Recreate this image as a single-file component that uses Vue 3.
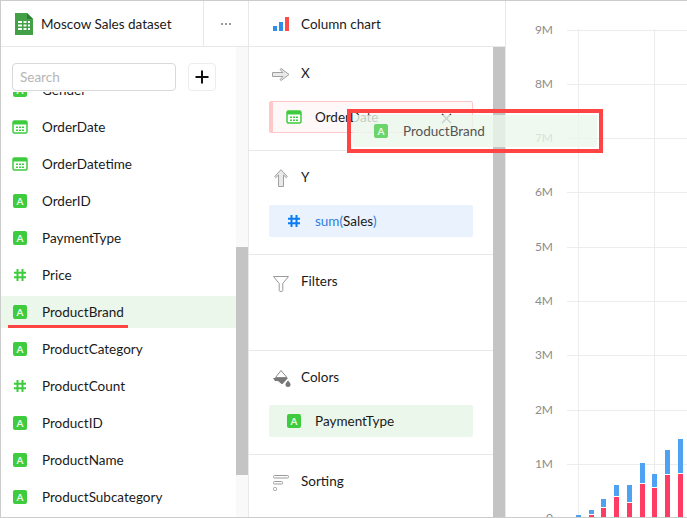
<template>
  <div class="wizard">
    <aside class="dataset-panel">
      <header class="panel-head">
        <svg class="sheet-icon" width="18" height="22" viewBox="0 0 18 22">
          <path d="M0 0h12l6 6v16H0z" fill="#43a047" />
          <path d="M12 0l6 6h-6z" fill="#2e7d32" />
          <path d="M3 8h4v2H3zM8.500 8h3v2h-3zM13 8h2v2h-2zM3 11.500h4v2H3zM8.500 11.500h3v2h-3zM13 11.500h2v2h-2zM3 15h4v2H3zM8.500 15h3v2h-3zM13 15h2v2h-2z" fill="#fff" />
        </svg>
        <span class="dataset-name">Moscow Sales dataset</span>
        <button class="more-btn"><i></i><i></i><i></i></button>
      </header>
      <div class="panel-body">
        <div class="field-column">
          <div class="search-row">
            <div class="search-box">Search</div>
            <button class="add-btn">
              <svg width="14" height="14" viewBox="0 0 14 14"><path d="M7 0.500v13M0.500 7h13" stroke="#111" stroke-width="2" /></svg>
            </button>
          </div>
          <div class="field-area">
            <ul class="field-list">
              <li v-for="field in fields" :key="field.name" :class="['field-row', { active: field.name === 'ProductBrand' }]">
                <svg v-if="field.type === 'date'" class="type-icon" width="16" height="14" viewBox="0 0 16 14">
                  <rect x="1" y="1" width="14" height="12" rx="1.500" fill="#fff" stroke="#3ecb3e" stroke-width="1.500" />
                  <path d="M1 1h14v3.500H1z" fill="#3ecb3e" />
                  <path d="M4 6.500h2V8H4zM7 6.500h2V8H7zM10 6.500h2V8h-2zM4 9.500h2V11H4zM7 9.500h2V11H7zM10 9.500h2V11h-2z" fill="#3ecb3e" />
                </svg>
                <span v-else-if="field.type === 'text'" class="type-text">A</span>
                <svg v-else class="type-icon" width="14" height="14" viewBox="0 0 14 14">
                  <path d="M4.500 1v12M9.500 1v12M1 4.800h12M1 9.200h12" stroke="#3ecb3e" stroke-width="2" fill="none" />
                </svg>
                <span class="field-name">{{ field.name }}</span>
              </li>
            </ul>
          </div>
        </div>
        <div class="scroll-track"><div class="list-thumb"></div></div>
      </div>
      <div class="field-underline"></div>
    </aside>

    <section class="config-panel">
      <header class="panel-head chart-head">
        <svg width="16" height="14" viewBox="0 0 16 14" class="chart-icon">
          <path d="M0 9h4v5H0z" fill="#2f8fe8" />
          <path d="M6 5h4v9H6z" fill="#2f8fe8" />
          <path d="M12 0h4v14h-4z" fill="#ff4b4b" />
        </svg>
        <span>Column chart</span>
      </header>
      <div class="config-body">
        <div class="sections">
          <div class="section">
            <div class="section-title">
              <svg width="18" height="13" viewBox="0 0 18 13" class="section-icon icon-x">
                <path d="M0.500 4.500H11L8 1.500 9.200 0.500 17 6.500 9.200 12.500 8 11.500 11 8.500H0.500z" fill="#e9e9e9" stroke="#a0a0a0" />
              </svg>
              <span>X</span>
            </div>
            <div class="chip chip-error">
              <svg class="type-icon" width="16" height="14" viewBox="0 0 16 14">
                <rect x="1" y="1" width="14" height="12" rx="1.500" fill="#fff" stroke="#3ecb3e" stroke-width="1.500" />
                <path d="M1 1h14v3.500H1z" fill="#3ecb3e" />
                <path d="M4 6.500h2V8H4zM7 6.500h2V8H7zM10 6.500h2V8h-2zM4 9.500h2V11H4zM7 9.500h2V11H7zM10 9.500h2V11h-2z" fill="#3ecb3e" />
              </svg>
              <span class="chip-name">OrderDate</span>
              <svg class="chip-close" width="11" height="11" viewBox="0 0 11 11"><path d="M1 1l9 9M10 1l-9 9" stroke="#444" stroke-width="1.500" /></svg>
            </div>
          </div>
          <div class="section">
            <div class="section-title">
              <svg width="14" height="18" viewBox="0 0 14 18" class="section-icon icon-y">
                <path d="M7 0.700L13.300 7.500 12.300 8.700 9.500 6V17.500H4.500V6L1.700 8.700 .7 7.500z" fill="#e9e9e9" stroke="#a0a0a0" />
              </svg>
              <span>Y</span>
            </div>
            <div class="chip chip-measure">
              <svg class="type-icon hash" width="14" height="14" viewBox="0 0 14 14">
                <path d="M4.500 1v12M9.500 1v12M1 4.800h12M1 9.200h12" stroke="#0c7cf2" stroke-width="2" fill="none" />
              </svg>
              <span class="chip-name"><b>sum(</b>Sales<b>)</b></span>
            </div>
          </div>
          <div class="section filters">
            <div class="section-title">
              <svg width="16" height="16" viewBox="0 0 16 16" class="section-icon icon-filter">
                <path d="M0.500 0.500h15l-5.700 7v7q0 1-1.800 1t-1.800-1v-7z" fill="#fff" stroke="#9a9a9a" />
              </svg>
              <span>Filters</span>
            </div>
          </div>
          <div class="section">
            <div class="section-title">
              <svg width="18" height="17" viewBox="0 0 18 17" class="section-icon icon-colors">
                <path d="M8 0.500l1.200 1.500 4.800 5.500H2.500z" fill="#fff" stroke="#8a8a8a" />
                <path d="M0 8h15l-5 5.500q-1 1-2 0L5 11l-3 0z" fill="#777" />
                <path d="M15 10.500q2.500 2.500 2.500 4a2.400 2.400 0 0 1-5 0q0-1.500 2.500-4z" fill="#777" />
              </svg>
              <span>Colors</span>
            </div>
            <div class="chip chip-dimension">
              <span class="type-text">A</span>
              <span class="chip-name">PaymentType</span>
            </div>
          </div>
          <div class="section">
            <div class="section-title">
              <svg width="16" height="16" viewBox="0 0 16 16" class="section-icon icon-sort">
                <rect x="0.500" y="0.500" width="15" height="2.500" rx="1" fill="#fff" stroke="#9a9a9a" />
                <rect x="0.500" y="6.500" width="9" height="2.500" rx="1" fill="#fff" stroke="#9a9a9a" />
                <rect x="0.500" y="12.500" width="3" height="3" rx="1" fill="#fff" stroke="#9a9a9a" />
              </svg>
              <span>Sorting</span>
            </div>
          </div>
        </div>
        <div class="config-scroll"></div>
      </div>
    </section>

    <main class="chart-panel">
      <svg class="chart" width="181" height="517" viewBox="506 1 181 517">
        <line x1="578.500" y1="29" x2="578.500" y2="518" stroke="#ececec" />
        <line x1="654.500" y1="29" x2="654.500" y2="518" stroke="#ececec" />
        <g v-for="tick in ticks" :key="tick.label">
          <text x="553" :y="tick.y + 3" text-anchor="end" class="tick">{{ tick.label }}</text>
          <line x1="567" :y1="tick.y" x2="687" :y2="tick.y" stroke="#ececec" />
        </g>
        <g v-for="bar in bars" :key="bar.x">
          <rect :x="bar.x" :y="bar.blue" width="5" :height="bar.blueEnd - bar.blue" fill="#4da2f1" />
          <rect v-if="bar.red" :x="bar.x" :y="bar.red" width="5" :height="518 - bar.red" fill="#ff3d64" />
        </g>
      </svg>
    </main>

    <div class="drag-ghost">
      <span class="type-text">A</span>
      <span class="ghost-name">ProductBrand</span>
    </div>
    <div class="drag-frame"></div>
  </div>
</template>

<script setup>
const names = [
  ['Gender', 'text'],
  ['OrderDate', 'date'],
  ['OrderDatetime', 'date'],
  ['OrderID', 'text'],
  ['PaymentType', 'text'],
  ['Price', 'num'],
  ['ProductBrand', 'text'],
  ['ProductCategory', 'text'],
  ['ProductCount', 'num'],
  ['ProductID', 'text'],
  ['ProductName', 'text'],
  ['ProductSubcategory', 'text'],
]
const fields = names.map(([name, type]) => ({ name, type }))

const ticks = [
  { label: '9M', y: 30.5 },
  { label: '8M', y: 84.5 },
  { label: '7M', y: 138.5 },
  { label: '6M', y: 192.5 },
  { label: '5M', y: 247.5 },
  { label: '4M', y: 301.5 },
  { label: '3M', y: 355.5 },
  { label: '2M', y: 410.5 },
  { label: '1M', y: 464.5 },
  { label: '0', y: 518.5 },
]

const bars = [
  { x: 576, blue: 515, blueEnd: 518, red: 0 },
  { x: 589, blue: 510, blueEnd: 514, red: 515 },
  { x: 601, blue: 499, blueEnd: 507, red: 508 },
  { x: 614, blue: 485, blueEnd: 496, red: 497 },
  { x: 627, blue: 485, blueEnd: 502, red: 503 },
  { x: 640, blue: 463, blueEnd: 483, red: 484 },
  { x: 652, blue: 474, blueEnd: 487, red: 488 },
  { x: 665, blue: 450, blueEnd: 474, red: 475 },
  { x: 678, blue: 439, blueEnd: 473, red: 474 },
]
</script>

<style>
html, body {
  margin: 0;
  background: #fff;
}
</style>

<style scoped>
.wizard {
  position: relative;
  display: flex;
  width: 687px;
  height: 518px;
  box-sizing: border-box;
  border-top: 1px solid #ccc;
  border-left: 1px solid #ccc;
  border-bottom: 1px solid #ccc;
  overflow: hidden;
  font-family: Lato, "Open Sans", sans-serif;
  font-size: 13.5px;
  color: #1a1a1a;
}

.dataset-panel {
  position: relative;
  display: flex;
  flex-direction: column;
  width: 248px;
  flex: none;
  box-sizing: border-box;
  border-right: 1px solid #e8e8e8;
}

.panel-head {
  display: flex;
  align-items: center;
  height: 46px;
  flex: none;
  box-sizing: border-box;
  border-bottom: 1px solid #e8e8e8;
}

.sheet-icon {
  margin-left: 14px;
  margin-right: 8px;
  flex: none;
}

.dataset-name {
  flex: 1;
  white-space: nowrap;
}

.more-btn {
  display: flex;
  align-items: center;
  justify-content: center;
  gap: 2px;
  width: 45px;
  height: 45px;
  padding: 0;
  background: none;
  border: none;
  border-left: 1px solid #e8e8e8;
}

.more-btn i {
  width: 2px;
  height: 2px;
  border-radius: 50%;
  background: #777;
}

.panel-body {
  flex: 1;
  display: flex;
  min-height: 0;
}

.field-column {
  flex: 1;
  display: flex;
  flex-direction: column;
  min-width: 0;
}

.search-row {
  position: relative;
  z-index: 1;
  display: flex;
  gap: 12px;
  height: 45px;
  flex: none;
  box-sizing: border-box;
  padding: 16px 0 0 11px;
  background: #fff;
}

.search-box {
  width: 164px;
  height: 28px;
  box-sizing: border-box;
  padding-left: 7px;
  line-height: 26px;
  border: 1px solid #d9d9d9;
  border-radius: 4px;
  color: #b5b5b5;
}

.add-btn {
  display: flex;
  align-items: center;
  justify-content: center;
  width: 28px;
  height: 28px;
  padding: 0;
  background: #fff;
  border: 1px solid #ececec;
  border-radius: 4px;
}

.field-area {
  flex: 1;
  overflow: hidden;
  min-height: 0;
}

.field-list {
  list-style: none;
  margin: -18px 0 0;
  padding: 0;
}

.field-row {
  display: flex;
  align-items: center;
  height: 32px;
  margin-bottom: 5px;
  padding-left: 11px;
}

.field-row.active {
  background: #ebf7eb;
}

.type-icon {
  flex: none;
}

.field-row .type-icon {
  margin-right: 14px;
}

.field-row .type-icon[width="14"] {
  margin-left: 1px;
  margin-right: 15px;
}

.type-text {
  display: flex;
  align-items: center;
  justify-content: center;
  flex: none;
  width: 14px;
  height: 14px;
  border-radius: 2px;
  background: #3ecb3e;
  color: #e9f9e9;
  font-size: 10px;
  font-weight: 700;
  line-height: 14px;
}

.field-row .type-text {
  margin-left: 1px;
  margin-right: 15px;
}

.field-name {
  white-space: nowrap;
}

.scroll-track {
  width: 12px;
  flex: none;
  background: #f9f9f9;
}

.list-thumb {
  height: 228px;
  margin-top: 200px;
  background: #c4c4c4;
}

.field-underline {
  position: absolute;
  left: 7px;
  top: 324px;
  width: 120px;
  height: 3px;
  background: #ff4444;
}

.config-panel {
  display: flex;
  flex-direction: column;
  width: 257px;
  flex: none;
  box-sizing: border-box;
  border-right: 1px solid #e8e8e8;
}

.chart-head {
  padding-left: 24px;
}

.chart-icon {
  margin-right: 12px;
}

.config-body {
  flex: 1;
  display: flex;
  min-height: 0;
}

.sections {
  flex: 1;
}

.section {
  padding: 16px 20px 17px 20px;
  border-bottom: 1px solid #e8e8e8;
}

.section:last-child {
  border-bottom: none;
}

.filters {
  height: 96px;
  box-sizing: border-box;
}

.section-title {
  position: relative;
  display: flex;
  align-items: center;
  height: 20px;
  padding-left: 32px;
}

.section-icon {
  position: absolute;
}

.icon-x {
  left: 3px;
  top: 5px;
}

.icon-y {
  left: 5px;
  top: 2px;
}

.icon-filter {
  left: 4px;
  top: 5px;
}

.icon-colors {
  left: 4px;
  top: 3px;
}

.icon-sort {
  left: 4px;
  top: 4px;
}

.chip {
  display: flex;
  align-items: center;
  height: 32px;
  margin-top: 18px;
  box-sizing: border-box;
  border-radius: 2px;
  padding-left: 18px;
}

.chip-name {
  margin-left: 14px;
}

.chip-error {
  position: relative;
  background: #fff8f8;
  border: 1px solid #ffc8c8;
  border-left: 4px solid #ffc8c8;
  padding-left: 13px;
}

.chip-error .chip-name {
  margin-left: 13px;
}

.chip-close {
  position: absolute;
  left: 168px;
  top: 11px;
}

.chip-measure {
  background: #e9f2fd;
}

.chip-measure b {
  font-weight: 400;
  color: #2f7fe0;
}

.chip-dimension {
  background: #ebf7eb;
}

.config-scroll {
  width: 12px;
  flex: none;
  background: #c4c4c4;
}

.chart-panel {
  flex: 1;
  min-width: 0;
}

.chart {
  display: block;
}

.tick {
  font-family: Lato, "Open Sans", sans-serif;
  font-size: 12px;
  fill: #8c8c8c;
}

.drag-ghost {
  position: absolute;
  left: 352px;
  top: 114px;
  display: flex;
  align-items: center;
  gap: 15px;
  width: 244px;
  height: 32px;
  padding-left: 21px;
  box-sizing: border-box;
  border-radius: 2px;
  background: rgba(235, 247, 235, 0.8);
  color: #555;
}

.drag-ghost .type-text {
  background: #6bd56b;
}

.drag-frame {
  position: absolute;
  left: 346px;
  top: 108px;
  width: 256px;
  height: 44px;
  box-sizing: border-box;
  border: 4px solid #ff4444;
}
</style>
